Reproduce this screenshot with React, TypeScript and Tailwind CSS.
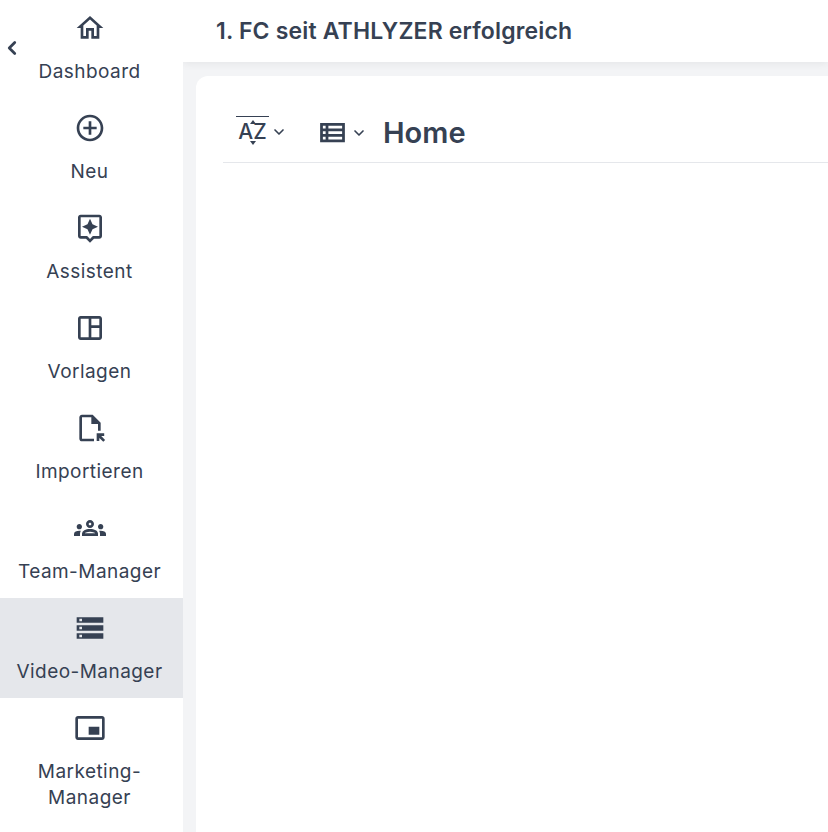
import React from 'react'
import { ChevronDown, ChevronLeft } from 'lucide-react'
import {
  MdOutlineHome,
  MdOutlineAddCircleOutline,
  MdOutlineAssistant,
  MdOutlineSpaceDashboard,
  MdOutlineFileOpen,
  MdOutlineGroups,
  MdStorage,
  MdPictureInPictureAlt,
  MdOutlineViewList,
} from 'react-icons/md'

const navItems = [
  { label: 'Dashboard', icon: MdOutlineHome },
  { label: 'Neu', icon: MdOutlineAddCircleOutline },
  { label: 'Assistent', icon: MdOutlineAssistant },
  { label: 'Vorlagen', icon: MdOutlineSpaceDashboard },
  { label: 'Importieren', icon: MdOutlineFileOpen },
  { label: 'Team-Manager', icon: MdOutlineGroups },
  { label: 'Video-Manager', icon: MdStorage, active: true },
  { label: 'Marketing-\nManager', icon: MdPictureInPictureAlt },
]

function SortIcon() {
  return (
    <div className="flex w-[33px] flex-col items-center border-t border-gray-700">
      <svg width="8" height="4" viewBox="0 0 8 4" className="mt-[3px] fill-gray-700">
        <path d="M4 0l3 4H1z" />
      </svg>
      <span className="-my-[2px] text-[21px] font-medium leading-[20px]">AZ</span>
      <svg width="8" height="4" viewBox="0 0 8 4" className="mt-[1px] fill-gray-700">
        <path d="M4 4L1 0h6z" />
      </svg>
    </div>
  )
}

export default function App() {
  return (
    <div className="relative flex h-[832px] w-[828px] overflow-hidden bg-gray-100 font-['Inter',sans-serif] text-gray-700">
      {/* Sidebar */}
      <aside className="z-10 -mt-[2px] w-[183px] shrink-0 bg-white">
        {navItems.map((item) => {
          const Icon = item.icon
          return (
            <div
              key={item.label}
              className={`flex h-[100px] flex-col items-center pr-[4px] pt-[14px] ${item.active ? 'bg-gray-200' : ''}`}
            >
              <Icon size={32} className="shrink-0" />
              <span className="mt-[15px] whitespace-pre-line text-center text-[19px] leading-[26px] tracking-[0.45px]">
                {item.label}
              </span>
            </div>
          )
        })}
      </aside>
      <ChevronLeft size={22} strokeWidth={3} className="absolute left-[1px] top-[37px] z-20" />

      <div className="flex min-w-0 flex-1 flex-col">
        {/* Top bar */}
        <header className="flex h-[62px] shrink-0 items-center bg-white pl-[33px] shadow-[0_2px_8px_rgba(0,0,0,0.06)]">
          <h2 className="text-[23px] font-semibold tracking-[0.17px]">1. FC seit ATHLYZER erfolgreich</h2>
        </header>

        {/* Content */}
        <main className="flex-1 pl-[13px] pt-[14px]">
          <div className="h-full rounded-tl-xl bg-white pl-[27px] pt-[36px]">
            <div className="flex h-[51px] items-start border-b border-gray-200 pl-[13px]">
              <div className="mt-[4px] flex items-center">
                <SortIcon />
                <ChevronDown size={16} strokeWidth={2.5} className="ml-[2px] mt-[3px]" />
              </div>
              <div className="ml-[33px] mt-[4px] flex items-center">
                <MdOutlineViewList size={33} className="-mx-[4px]" />
                <ChevronDown size={16} strokeWidth={2.5} className="ml-[6px]" />
              </div>
              <h1 className="ml-[16px] text-[29px] font-semibold leading-[42px]">Home</h1>
            </div>
          </div>
        </main>
      </div>
    </div>
  )
}
